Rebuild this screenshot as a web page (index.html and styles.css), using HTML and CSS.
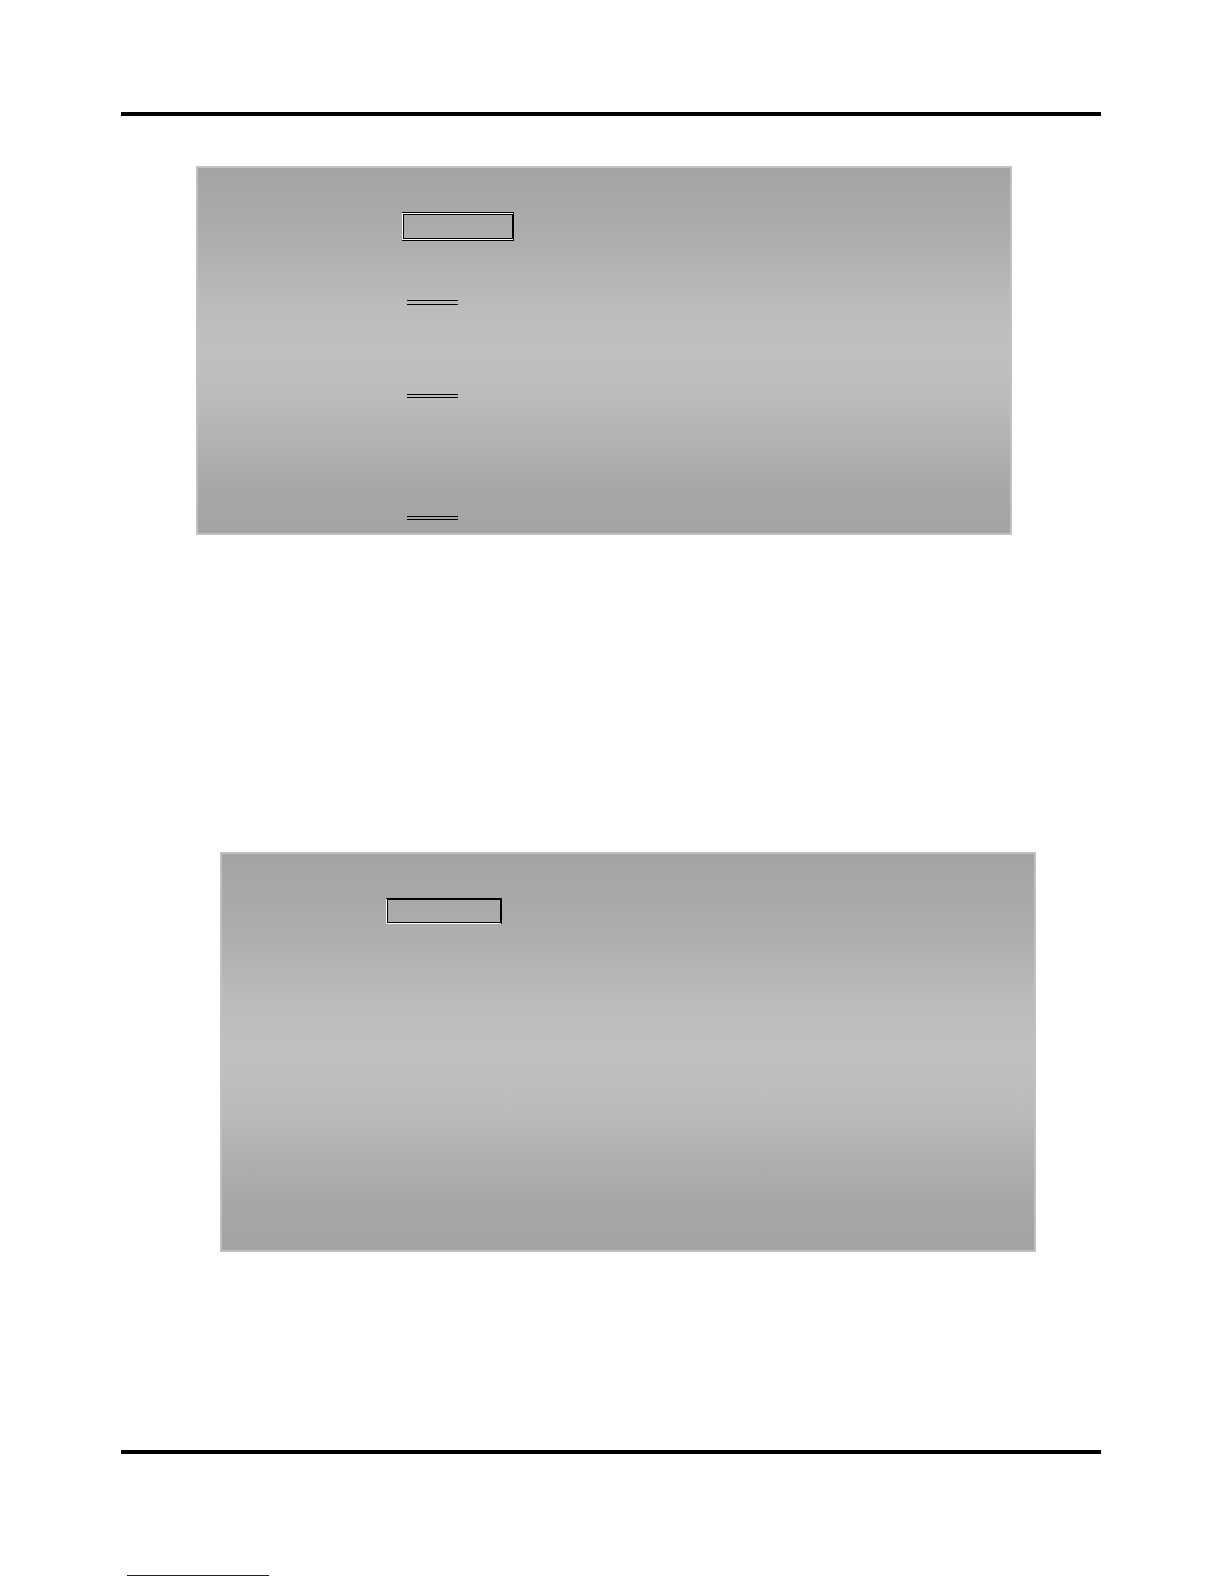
FILE: index.html
```html
<!DOCTYPE html>
<html lang="en">
<head>
    <meta charset="UTF-8">
    <title>Page</title>
    <link rel="stylesheet" href="styles.css">
</head>
<body>
    <main class="page">
        <hr class="rule">
        <section class="panel panel-first">
            <div class="key key-double"><div class="key-edge"><div class="key-face"></div></div></div>
            <div class="line line-wide"></div>
            <div class="line"></div>
            <div class="line line-last"></div>
        </section>
        <section class="panel panel-second">
            <div class="key key-single"><div class="key-edge"><div class="key-face"></div></div></div>
        </section>
        <hr class="rule">
        <div class="underline"></div>
    </main>
</body>
</html>
```

FILE: styles.css
```css
*{
    box-sizing: border-box;
}
body{
    margin: 0;
    background-color: white;
    font-family: "Liberation Sans", Arial, sans-serif;
}
.page{
    display: flex;
    flex-direction: column;
    padding: 112px 123px 8px 121px;
}
.rule{
    width: 100%;
    height: 4px;
    margin: 0;
    border: none;
    background-color: black;
}
.panel{
    display: flex;
    flex-direction: column;
    align-items: flex-start;
    border: solid 2px #c0c0c0;
    background: linear-gradient(#a4a4a4 0%, #a8a8a8 10%, #afafaf 22%, #bcbcbc 38%, #bfbfbf 47%, #bfbfbf 54%, #bcbcbc 63%, #b0b0b0 77%, #a7a7a7 87%, #a4a4a4 100%);
}
.panel-first{
    margin: 50px 89px 0 75px;
    padding: 44px 204px 13px 204px;
}
.panel-second{
    min-height: 400px;
    margin: 317px 65px 198px 99px;
    padding: 44px 164px;
}
/* bevelled boxes: outer black, white highlight, inner black */
.key{
    display: flex;
    border: solid 1px black;
    border-left: none;
}
.key-edge{
    display: flex;
    flex: 1;
    border: solid 1px white;
    border-right: none;
}
.key-face{
    flex: 1;
    border: solid 1px black;
}
.key-double{
    width: 112px;
    height: 29px;
}
.key-single{
    width: 116px;
    height: 26px;
    border-bottom: none;
}
.key-single .key-edge{
    border-top: none;
}
/* double strokes */
.line{
    width: 51px;
    height: 4px;
    margin: 89px 0 0 5px;
    border-top: solid 1px black;
    border-bottom: solid 1px black;
}
.line-wide{
    height: 5px;
    margin-top: 59px;
}
.line-last{
    margin-top: 118px;
}
.underline{
    width: 142px;
    height: 1px;
    margin: 121px 0 0 6px;
    background-color: #15108c;
}
```
